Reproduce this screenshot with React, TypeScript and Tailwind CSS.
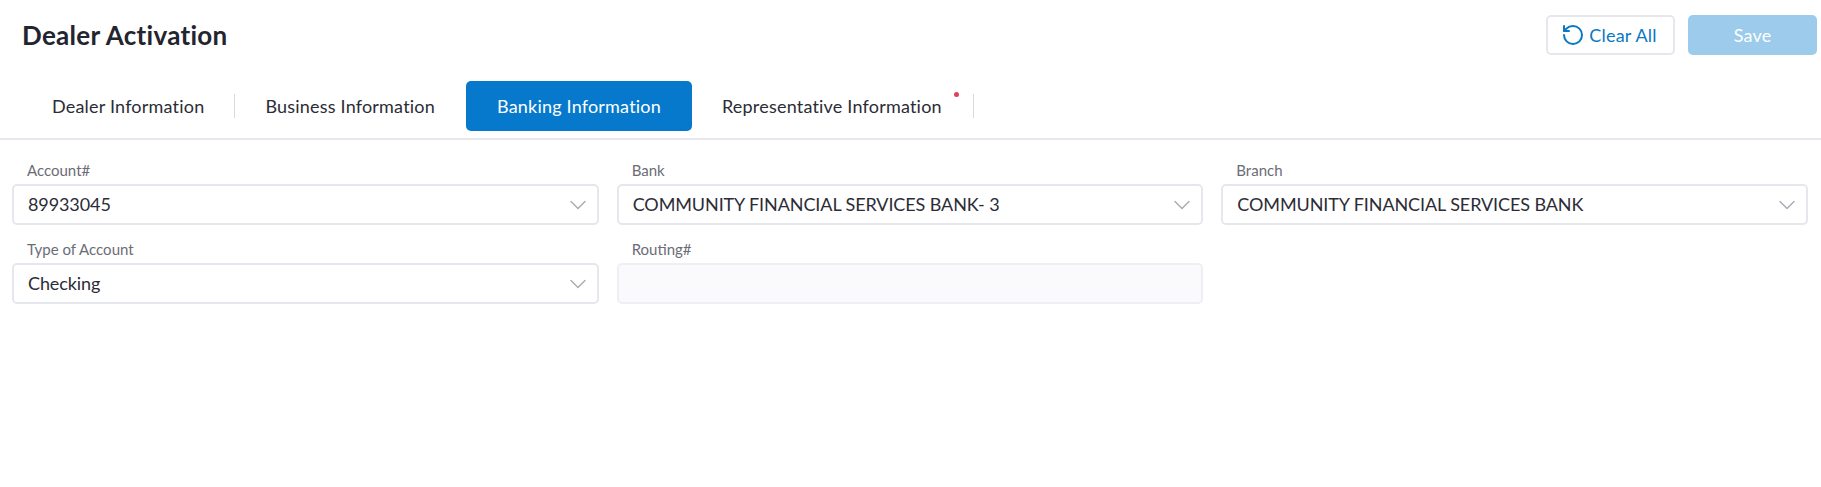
import { ChevronDown, RotateCcw } from "lucide-react"

const tabs = [
  { label: "Dealer Information", divider: true },
  { label: "Business Information" },
  { label: "Banking Information", active: true },
  { label: "Representative Information", dot: true, divider: true },
]

function Field({ label, value, disabled }: { label: string; value?: string; disabled?: boolean }) {
  return (
    <div className="flex flex-col">
      <label className="h-[38px] pl-[15px] pt-[14px] text-[15px] leading-[20px] text-[#6c6c76]">{label}</label>
      <div
        className={
          disabled
            ? "flex h-[41px] items-center rounded-[5px] border-2 border-[#eeeff5] bg-[#fafafd] px-[14px]"
            : "flex h-[41px] items-center justify-between rounded-[5px] border-2 border-[#e6e7ee] bg-white pl-[14px] pr-[5px]"
        }
      >
        <span className="text-[18px] tracking-[-0.1px] text-[#2c2c36]">{value}</span>
        {!disabled && <ChevronDown className="h-[28px] w-[28px] text-[#a9a9b2]" strokeWidth={1.2} />}
      </div>
    </div>
  )
}

export default function App() {
  return (
    <div className="h-[487px] w-full bg-white font-['Lato',sans-serif]">
      <div className="flex items-start justify-between pl-[22px] pr-[4px] pt-[15px]">
        <h1 className="text-[26px] font-bold leading-[40px] tracking-[0.3px] text-[#24242e]">Dealer Activation</h1>
        <div className="flex gap-[13px]">
          <button className="flex h-[40px] w-[129px] items-center justify-center gap-[4px] rounded-[5px] border-2 border-[#e6e7ee] bg-white pr-[3px] text-[18px] tracking-[0.2px] text-[#0a78c4]">
            <RotateCcw className="h-[24px] w-[24px]" strokeWidth={2} />
            Clear All
          </button>
          <button className="h-[40px] w-[129px] rounded-[5px] bg-[#9ccbeb] text-[18px] tracking-[0.2px] text-white">Save</button>
        </div>
      </div>

      <div className="mt-[26px] flex h-[59px] items-start border-b-2 border-[#e6e7ee] pl-[22px]">
        {tabs.map((tab) => (
          <div key={tab.label} className="flex h-[50px] items-center">
            <div
              className={
                tab.active
                  ? "ml-px flex h-[50px] w-[226px] items-center justify-center rounded-[5px] bg-[#0679cc] text-[18px] tracking-[0.2px] text-white"
                  : tab.dot
                    ? "relative flex h-[50px] items-center pl-[30px] pr-[31px] text-[18px] tracking-[0.2px] text-[#2c2c36]"
                    : "flex h-[50px] items-center px-[30px] text-[18px] tracking-[0.2px] text-[#2c2c36]"
              }
            >
              {tab.label}
              {tab.dot && <span className="absolute right-[14px] top-[11px] h-[5px] w-[5px] rounded-full bg-[#e0405a]" />}
            </div>
            {tab.divider && <div className="h-[24px] w-px bg-[#d9dae2]" />}
          </div>
        ))}
      </div>

      <div className="grid grid-cols-3 gap-x-[18px] pl-[12px] pr-[13px] pt-[6px]">
        <Field label="Account#" value="89933045" />
        <Field label="Bank" value="COMMUNITY FINANCIAL SERVICES BANK- 3" />
        <Field label="Branch" value="COMMUNITY FINANCIAL SERVICES BANK" />
        <Field label="Type of Account" value="Checking" />
        <Field label="Routing#" disabled />
      </div>
    </div>
  )
}
